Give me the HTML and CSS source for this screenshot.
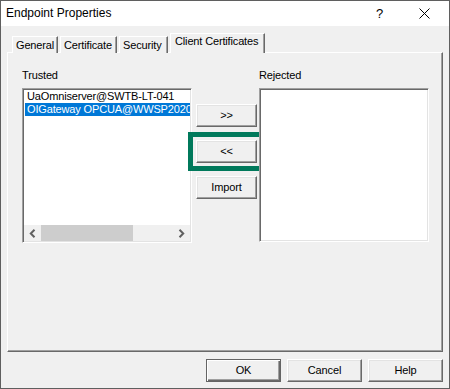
FILE: index.html
```html
<!DOCTYPE html>
<html>
<head>
<meta charset="utf-8">
<link rel="stylesheet" href="styles.css">
</head>
<body>
<div class="window">
  <div class="titlebar">
    <span class="title">Endpoint Properties</span>
    <span class="help-btn">?</span>
    <span class="close-btn">
      <svg width="11" height="11" viewBox="0 0 11 11"><path d="M0.5 0.5 L10.5 10.5 M10.5 0.5 L0.5 10.5" stroke="#000" stroke-width="1" fill="none"/></svg>
    </span>
  </div>
  <div class="client">
    <div class="tabs">
      <div class="tab t-general">General</div>
      <div class="tab t-cert">Certificate</div>
      <div class="tab t-sec">Security</div>
      <div class="tab selected t-client">Client Certificates</div>
    </div>
    <div class="panel">
      <div class="col">
        <div class="label">Trusted</div>
        <div class="listbox">
          <div class="items">
            <div class="item">UaOmniserver@SWTB-LT-041</div>
            <div class="item sel">OIGateway OPCUA@WWSP2020-OPCUA</div>
          </div>
          <div class="hscroll">
            <span class="arrow">
              <svg width="7" height="9" viewBox="0 0 7 9"><path d="M5.5 0.8 L1.8 4.5 L5.5 8.2" stroke="#606060" stroke-width="2" fill="none"/></svg>
            </span>
            <div class="track"><div class="thumb"></div></div>
            <span class="arrow">
              <svg width="7" height="9" viewBox="0 0 7 9"><path d="M1.5 0.8 L5.2 4.5 L1.5 8.2" stroke="#606060" stroke-width="2" fill="none"/></svg>
            </span>
          </div>
        </div>
      </div>
      <div class="mid">
        <button class="btn mid-btn">&gt;&gt;</button>
        <button class="btn mid-btn focus">&lt;&lt;</button>
        <button class="btn mid-btn">Import</button>
      </div>
      <div class="col">
        <div class="label">Rejected</div>
        <div class="listbox rej"></div>
      </div>
    </div>
    <div class="footer">
      <button class="btn foot-btn default">OK</button>
      <button class="btn foot-btn">Cancel</button>
      <button class="btn foot-btn">Help</button>
    </div>
  </div>
</div>
</body>
</html>
```

FILE: styles.css
```css
* { box-sizing: border-box; }
html, body { margin: 0; padding: 0; }
body {
  width: 450px;
  height: 389px;
  background: #f0f0f0;
  font-family: "Liberation Sans", Arial, sans-serif;
  font-size: 11px;
  letter-spacing: -0.15px;
  color: #000;
}
.window {
  width: 450px;
  height: 389px;
  border: 1px solid #5f5f5f;
  background: #f0f0f0;
  display: flex;
  flex-direction: column;
}
.titlebar {
  height: 25px;
  background: #fff;
  display: flex;
  align-items: center;
  padding-left: 5px;
  flex: none;
}
.title {
  font-size: 12px;
  letter-spacing: 0;
  flex: 1;
  padding-bottom: 1px;
}
.help-btn {
  font-size: 13px;
  letter-spacing: 0;
  width: 10px;
  margin-right: 33px;
  padding-bottom: 1px;
}
.close-btn {
  display: flex;
  margin-right: 19px;
}
.client {
  flex: 1;
  display: flex;
  flex-direction: column;
  padding: 7px 6px 0 6px;
}
.tabs {
  display: flex;
  align-items: flex-end;
  height: 20px;
  padding-left: 5px;
  position: relative;
  z-index: 1;
  margin-bottom: -1px;
}
.tab {
  height: 17px;
  border-top: 1px solid #fff;
  border-left: 1px solid #fff;
  border-right: 1px solid #696969;
  box-shadow: inset -1px 0 0 #a0a0a0;
  padding-left: 3px;
  padding-top: 2px;
  margin-right: 2px;
  white-space: nowrap;
  line-height: 13px;
  background: #f0f0f0;
}
.t-general { width: 46px; }
.t-cert { width: 57px; }
.t-sec { width: 49px; }
.tab.selected {
  height: 20px;
  width: 95px;
  padding-left: 4px;
  padding-top: 1px;
  margin-right: 0;
}
.panel {
  width: 436px;
  height: 300px;
  flex: none;
  border-top: 1px solid #fff;
  border-left: 1px solid #fff;
  border-right: 1px solid #696969;
  border-bottom: 1px solid #696969;
  box-shadow: inset -1px -1px 0 #a0a0a0;
  display: flex;
  padding: 16px 0 0 14px;
}
.col {
  display: flex;
  flex-direction: column;
}
.label {
  height: 13px;
  line-height: 13px;
  margin-bottom: 6px;
}
.listbox {
  width: 170px;
  height: 155px;
  background: #fff;
  border-top: 1px solid #a0a0a0;
  border-left: 1px solid #a0a0a0;
  border-right: 1px solid #fff;
  border-bottom: 1px solid #fff;
  box-shadow: inset 1px 1px 0 #696969, inset -1px -1px 0 #e3e3e3;
  padding: 1px;
  display: flex;
  flex-direction: column;
  overflow: hidden;
}
.listbox.rej { height: 154px; }
.items {
  flex: 1;
  overflow: hidden;
  padding-left: 1px;
}
.item {
  height: 13px;
  line-height: 13px;
  padding-left: 2px;
  white-space: nowrap;
  overflow: hidden;
}
.item.sel {
  background: #0078d7;
  color: #fff;
}
.hscroll {
  height: 16px;
  flex: none;
  display: flex;
  align-items: center;
  background: #f0f0f0;
}
.arrow {
  width: 17px;
  height: 16px;
  display: flex;
  align-items: center;
  justify-content: center;
  flex: none;
}
.track {
  flex: 1;
  height: 16px;
}
.thumb {
  width: 92px;
  height: 16px;
  background: #cdcdcd;
}
.mid {
  display: flex;
  flex-direction: column;
  gap: 13px;
  padding-top: 35px;
  margin-left: 4px;
  margin-right: 2px;
}
.btn {
  font-family: "Liberation Sans", Arial, sans-serif;
  font-size: 11px;
  letter-spacing: -0.15px;
  color: #000;
  background: #f0f0f0;
  border-top: 1px solid #fff;
  border-left: 1px solid #fff;
  border-right: 1px solid #696969;
  border-bottom: 1px solid #696969;
  box-shadow: inset -1px -1px 0 #a0a0a0, inset 1px 1px 0 #e3e3e3;
  padding: 0;
  margin: 0;
  line-height: 13px;
}
.mid-btn {
  width: 61px;
  height: 23px;
}
.mid-btn.focus {
  outline: 5px solid #00795b;
  outline-offset: 3px;
}
.footer {
  display: flex;
  justify-content: flex-end;
  gap: 6px;
  padding-top: 7px;
}
.foot-btn {
  width: 75px;
  height: 23px;
}
.foot-btn.default {
  border: 1px solid #646464;
  box-shadow: inset 1px 1px 0 #fff, inset -1px -1px 0 #696969, inset -2px -2px 0 #a0a0a0;
}
```
